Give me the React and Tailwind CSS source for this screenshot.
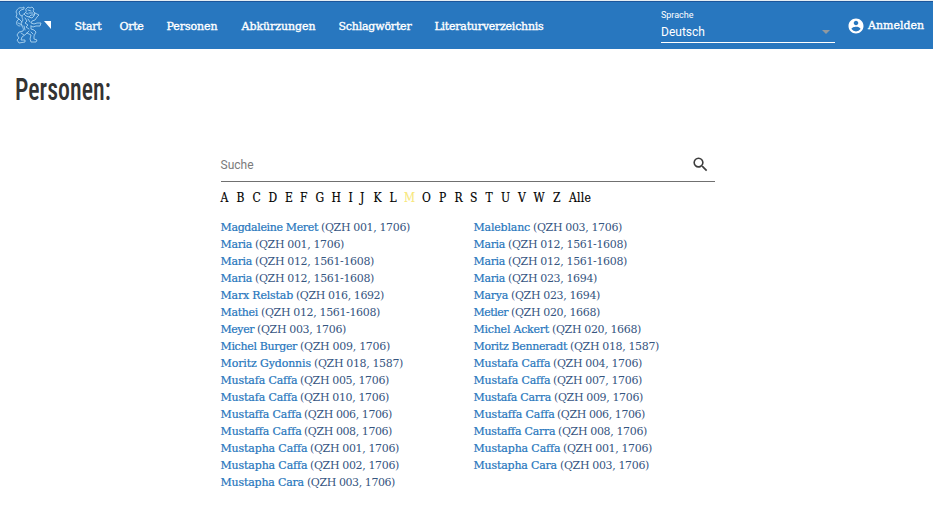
import { useLayoutEffect, useRef, useState } from "react";

// Sets a run of text to a given width by spreading its letters.
function Fit({ w, children, className = "" }) {
  const ref = useRef(null);
  const [space, setSpace] = useState(0);
  useLayoutEffect(() => {
    const natural = ref.current.getBoundingClientRect().width;
    setSpace((w - natural) / children.length);
  }, []);
  return (
    <span className={`inline-block whitespace-nowrap ${className}`} style={{ width: w }}>
      <span ref={ref} style={{ letterSpacing: space }}>{children}</span>
    </span>
  );
}

const left = [
  ["Magdaleine Meret", "(QZH 001, 1706)", 321, 410],
  ["Maria", "(QZH 001, 1706)", 255, 344],
  ["Maria", "(QZH 012, 1561-1608)", 255, 374],
  ["Maria", "(QZH 012, 1561-1608)", 255, 374],
  ["Marx Relstab", "(QZH 016, 1692)", 296, 384],
  ["Mathei", "(QZH 012, 1561-1608)", 261, 380],
  ["Meyer", "(QZH 003, 1706)", 257, 346],
  ["Michel Burger", "(QZH 009, 1706)", 300, 390],
  ["Moritz Gydonnis", "(QZH 018, 1587)", 314, 403],
  ["Mustafa Caffa", "(QZH 005, 1706)", 300, 389],
  ["Mustafa Caffa", "(QZH 010, 1706)", 300, 389],
  ["Mustaffa Caffa", "(QZH 006, 1706)", 304, 392],
  ["Mustaffa Caffa", "(QZH 008, 1706)", 304, 392],
  ["Mustapha Caffa", "(QZH 001, 1706)", 310, 399],
  ["Mustapha Caffa", "(QZH 002, 1706)", 310, 399],
  ["Mustapha Cara", "(QZH 003, 1706)", 307, 395],
];
const right = [
  ["Maleblanc", "(QZH 003, 1706)", 533, 622],
  ["Maria", "(QZH 012, 1561-1608)", 508, 627],
  ["Maria", "(QZH 012, 1561-1608)", 508, 627],
  ["Maria", "(QZH 023, 1694)", 508, 597],
  ["Marya", "(QZH 023, 1694)", 511, 600],
  ["Metler", "(QZH 020, 1668)", 511, 600],
  ["Michel Ackert", "(QZH 020, 1668)", 552, 641],
  ["Moritz Benneradt", "(QZH 018, 1587)", 570, 659],
  ["Mustafa Caffa", "(QZH 004, 1706)", 553, 642],
  ["Mustafa Caffa", "(QZH 007, 1706)", 553, 642],
  ["Mustafa Carra", "(QZH 009, 1706)", 554, 643],
  ["Mustaffa Caffa", "(QZH 006, 1706)", 557, 645],
  ["Mustaffa Carra", "(QZH 008, 1706)", 558, 647],
  ["Mustapha Caffa", "(QZH 001, 1706)", 563, 652],
  ["Mustapha Cara", "(QZH 003, 1706)", 560, 649],
];
const letters = [
  ["A", 16], ["B", 16], ["C", 16], ["D", 16.5], ["E", 15], ["F", 15.5], ["G", 16], ["H", 17],
  ["I", 11.5], ["J", 13.5], ["K", 16], ["L", 14.5], ["M", 18], ["O", 17], ["P", 15.5], ["R", 15.5],
  ["S", 15.5], ["T", 15.5], ["U", 17], ["V", 15.5], ["W", 19.5], ["Z", 16],
];
const nav = [
  ["Start", 27, 18], ["Orte", 24, 23], ["Personen", 51, 24], ["Abkürzungen", 74, 23],
  ["Schlagwörter", 73, 23], ["Literaturverzeichnis", 109, 0],
];

function Column({ rows, start }) {
  return (
    <ul className="w-[253px] text-[11px] leading-[17px]">
      {rows.map(([name, source, mid, end], i) => (
        <li key={i} className="flex h-[17px] whitespace-nowrap">
          <span className="shrink-0" style={{ width: mid - start }}>
            <Fit w={mid - start - 3} className="text-[#2676bd] [-webkit-text-stroke:0.2px_#2676bd]">{name}</Fit>
          </span>
          <Fit w={end - mid} className="text-[#36557f]">{source}</Fit>
        </li>
      ))}
    </ul>
  );
}

function Lion() {
  return (
    <svg className="h-[38px] w-7" viewBox="0 0 28 38" fill="none" stroke="#a9d3ef" strokeWidth="0.9" strokeLinecap="round" strokeLinejoin="round">
      <path d="M12 3 L14 1 L16 2 L18 1 L20 3 L19 5 L21 7 L20 9 L17 9 L15 11 L12 10 L10 8 L12 6Z" />
      <path d="M14 4 L17 5 M15 7 L19 7 M12 7 L14 8" />
      <path d="M10 8 C7 9 8 12 9 14 L7 17 L8 20 C9 22 10 23 9 25 L5 26 L3 29 L5 32 L3 34 L5 37 L11 36 L11 34 L7 34 L8 31 L12 28 L15 25" />
      <path d="M15 11 L18 12 L20 10 L21 7 L23 8 L25 9 L23 11 L21 14 L18 15 L17 17 L20 18 L23 17 L27 17 L26 20 L22 20 L19 21 L17 20" />
      <path d="M17 20 L17 23 L20 24 L22 26 L20 30 L20 33 L23 34 L22 36 L17 36 L16 33 L17 29 L13 27" />
      <path d="M6 20 C3 20 2 18 3 15 L5 13 L2 11 L3 8 L2 6 C3 3 5 1 8 2 L10 1 L10 3 L7 4 L5 6 L6 9 L8 10 M5 13 L8 16 M4 17 L8 19" />
      <path d="M11 12 L13 15 L11 17 L14 19 L12 21 L15 23 M14 13 L16 16 M10 20 L11 24 M7 27 L10 29 M17 26 L19 28" />
    </svg>
  );
}

export default function App() {
  return (
    <div className="h-[505px] w-[933px] overflow-hidden bg-white font-['DejaVu_Serif',serif]">
      <header className="flex h-[49px] items-start border-t border-[#e5edf3] bg-[#2877bf] text-white">
        <div className="flex h-12 w-[74.5px] items-start border-t border-[#1c569b] pt-[4px] pl-[14px]">
          <Lion />
          <svg className="mt-[15px] ml-[2px] h-2 w-[7px]" viewBox="0 0 7 8"><path d="M0 0H7V8Z" fill="#fff" /></svg>
        </div>
        <nav className="flex h-12 w-[586.5px] border-t border-[#1c569b] pt-[16px] text-[11px] leading-[17px] [-webkit-text-stroke:0.35px_white]">
          {nav.map(([label, w, gap]) => (
            <a key={label} style={{ marginRight: gap }} className="h-4"><Fit w={w}>{label}</Fit></a>
          ))}
        </nav>
        <div className="h-12 w-[174px] border-t border-[#1c569b] font-[Roboto,sans-serif]">
          <div className="h-[41px] border-b border-white pt-[7.5px]">
            <div className="text-[9px] leading-[11px]"><Fit w={32.5}>Sprache</Fit></div>
            <div className="flex items-center justify-between pt-[3px] pr-[5px] text-xs leading-[17px]">
              <Fit w={44}>Deutsch</Fit>
              <svg className="mt-[-1px] h-1 w-2" viewBox="0 0 8 4"><path d="M0 0H8L4 4Z" fill="#91999f" /></svg>
            </div>
          </div>
        </div>
        <a className="flex h-12 flex-1 items-start border-t border-[#1c569b] pt-[15px] pl-[12px] text-[11px] leading-[17px] [-webkit-text-stroke:0.35px_white]">
          <svg className="h-[18px] w-[18px]" viewBox="0 0 24 24" fill="white"><path d="M12 2C6.48 2 2 6.48 2 12s4.48 10 10 10 10-4.48 10-10S17.52 2 12 2zm0 3c1.66 0 3 1.34 3 3s-1.34 3-3 3-3-1.34-3-3 1.34-3 3-3zm0 14.2a7.2 7.2 0 0 1-6-3.22c.03-1.99 4-3.08 6-3.08s5.97 1.09 6 3.08a7.2 7.2 0 0 1-6 3.22z" /></svg>
          <span className="ml-[3px]"><Fit w={56}>Anmelden</Fit></span>
        </a>
      </header>
      <h1 className="mt-[20px] ml-[15px] h-[42px] w-[140px] origin-left scale-x-[0.77] font-[Roboto,sans-serif] text-[31px] leading-[42px] font-medium text-[#333] [font-stretch:condensed]">Personen:</h1>
      <main className="ml-[220.5px]">
        <div className="mt-[37px] flex h-[34px] w-[494.5px] items-start justify-between border-b border-[#707070] pr-[5px] font-[Roboto,sans-serif] text-xs">
          <span className="pt-[9px] leading-[17px] text-[#7b7b7b]"><Fit w={33}>Suche</Fit></span>
          <svg className="mt-[7px] h-[19px] w-[19px]" viewBox="0 0 24 24" fill="#3d3d3d"><path d="M15.5 14h-.79l-.28-.27A6.471 6.471 0 0 0 16 9.5 6.5 6.5 0 1 0 9.5 16c1.61 0 3.09-.59 4.23-1.57l.27.28v.79l5 4.99L20.49 19l-4.99-5zm-6 0C7.01 14 5 11.99 5 9.5S7.01 5 9.5 5 14 7.01 14 9.5 11.99 14 9.5 14z" /></svg>
        </div>
        <div className="mt-[8px] flex h-[17px] text-xs leading-[17px] text-black [font-stretch:condensed] [-webkit-text-stroke:0.15px]">
          {letters.map(([letter, w]) => (
            <a key={letter} style={{ width: w }} className={letter === "M" ? "shrink-0 text-[#f8e87c]" : "shrink-0"}>{letter}</a>
          ))}
          <Fit w={22}>Alle</Fit>
        </div>
        <div className="mt-[12px] flex">
          <Column rows={left} start={220.5} />
          <Column rows={right} start={473.5} />
        </div>
      </main>
    </div>
  );
}
